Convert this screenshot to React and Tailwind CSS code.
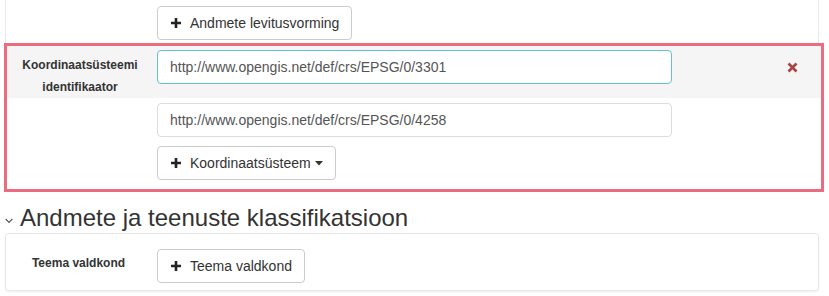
import React from "react";

const Plus = () => (
  <svg width="12" height="12" viewBox="0 0 12 12" className="shrink-0">
    <path d="M6 1v10M1 6h10" stroke="#222" strokeWidth="2.6" />
  </svg>
);

const Btn = ({ children, caret }) => (
  <button className="h-[34px] px-[12px] flex items-center gap-[8px] bg-white border border-[#ccc] rounded-[4px] text-[14px] text-[#333]">
    <Plus />
    <span>{children}</span>
    {caret && (
      <svg width="8" height="5" viewBox="0 0 8 5" className="ml-[-4px]">
        <path d="M0 0h8L4 4.5z" fill="#333" />
      </svg>
    )}
  </button>
);

export default function App() {
  return (
    <div className="w-[829px] h-[296px] bg-white overflow-hidden font-['Liberation_Sans',Arial,sans-serif] text-[14px] text-[#333]">
      <div className="ml-[5px] w-[814px] border-x border-[#e8e8e8] pt-[6px] pb-[3px]">
        <div className="pl-[151px]">
          <Btn>Andmete levitusvorming</Btn>
        </div>
      </div>
      <div className="ml-[4px] w-[820px] border-[3px] border-[#ec6c7f]">
        <div className="flex bg-[#f5f5f5] h-[52px] pt-[4px]">
          <div className="w-[150px] pr-[4px] text-center text-[12px] font-bold leading-[22px] pt-[4px] text-[#333]">
            Koordinaatsüsteemi
            <br />
            identifikaator
          </div>
          <input
            readOnly
            value="http://www.opengis.net/def/crs/EPSG/0/3301"
            className="w-[515px] h-[34px] px-[12px] bg-white border border-[#66c0cf] rounded-[4px] text-[14px] text-[#555] outline-none"
          />
          <div className="flex-1 flex justify-end pr-[23px] pt-[12px]">
            <svg width="11" height="11" viewBox="0 0 11 11">
              <path d="M1.5 1.5l8 8M9.5 1.5l-8 8" stroke="#a94442" strokeWidth="2.6" />
            </svg>
          </div>
        </div>
        <div className="pl-[150px] pt-[5px] pb-[9px] flex flex-col gap-[9px]">
          <input
            readOnly
            value="http://www.opengis.net/def/crs/EPSG/0/4258"
            className="w-[515px] h-[34px] px-[12px] bg-white border border-[#ddd] rounded-[4px] text-[14px] text-[#555] outline-none"
          />
          <div className="flex">
            <Btn caret>Koordinaatsüsteem</Btn>
          </div>
        </div>
      </div>
      <div className="flex items-center h-[41px] pl-[5px] pt-[10px]">
        <svg width="8" height="6" viewBox="0 0 8 6" className="mt-[6px]">
          <path d="M0.7 1l3.3 3.5L7.3 1" stroke="#555" strokeWidth="1.1" fill="none" />
        </svg>
        <h2 className="ml-[7px] text-[24px] leading-[26px] text-[#333]">
          Andmete ja teenuste klassifikatsioon
        </h2>
      </div>
      <div className="ml-[5px] w-[814px] h-[58px] border border-[#e8e8e8] rounded-[4px] shadow-[0_1px_2px_rgba(0,0,0,0.08)] flex pt-[15px]">
        <div className="w-[151px] pr-[6px] text-center text-[12px] font-bold pt-[5px]">
          Teema valdkond
        </div>
        <div>
          <Btn>Teema valdkond</Btn>
        </div>
      </div>
    </div>
  );
}
